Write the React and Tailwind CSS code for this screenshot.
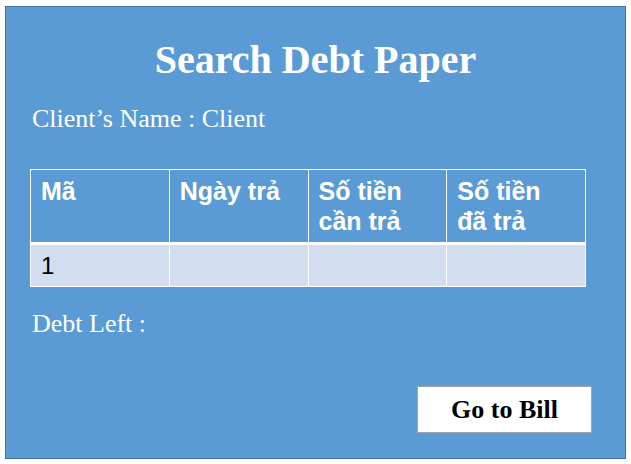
export default function App() {
  const serif = { fontFamily: '"Liberation Serif", "Times New Roman", serif' };
  const heads = ['Mã', 'Ngày trả', 'Số tiền cần trả', 'Số tiền đã trả'];

  return (
    <div className="w-[631px] h-[464px] bg-white pt-[6px] pl-[5px]">
      <div
        className="w-[621px] h-[453px] bg-[#5b9bd5] border border-[#41719c] flex flex-col text-white"
        style={serif}
      >
        <h1 className="mt-[33px] text-center text-[40px] leading-[40px] font-bold">Search Debt Paper</h1>
        <p className="mt-[26px] ml-[26px] text-[26px] leading-[26px]">Client’s Name : Client</p>

        <table
          className="mt-[37px] ml-[24px] w-[556px] border-collapse table-fixed"
          style={{ fontFamily: '"Liberation Sans", Arial, sans-serif' }}
        >
          <thead>
            <tr className="h-[74px]">
              {heads.map((h) => (
                <th
                  key={h}
                  className="border border-white border-b-[3px] align-top text-left font-bold text-[25px] leading-[30px] px-[10px] pt-[6px] pb-[4px]"
                >
                  {h}
                </th>
              ))}
            </tr>
          </thead>
          <tbody>
            <tr className="h-[43px] bg-[#d2deef] text-black">
              <td className="border border-white px-[10px] text-[24px] leading-[24px] pt-[1px]">1</td>
              <td className="border border-white"></td>
              <td className="border border-white"></td>
              <td className="border border-white"></td>
            </tr>
          </tbody>
        </table>

        <p className="mt-[24px] ml-[26px] text-[26px] leading-[26px]">Debt Left :</p>

        <button className="mt-auto mb-[25px] mr-[33px] self-end w-[175px] h-[47px] bg-white border border-[#a3a3a3] text-black text-[26px] font-bold">
          Go to Bill
        </button>
      </div>
    </div>
  );
}
